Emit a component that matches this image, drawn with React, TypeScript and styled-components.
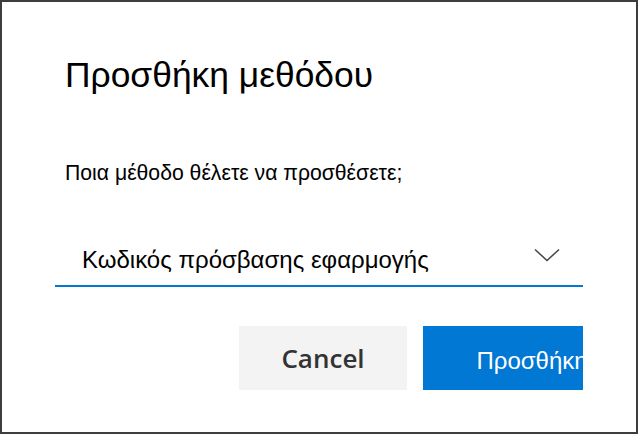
import React from "react";
import styled, { createGlobalStyle } from "styled-components";

const GlobalStyle = createGlobalStyle`
  html, body {
    margin: 0;
    padding: 0;
    background: #ffffff;
  }
  * {
    box-sizing: border-box;
  }
`;

const Frame = styled.div`
  width: 638px;
  height: 434px;
  border: 2px solid #3d3d3d;
  background: #ffffff;
  overflow: hidden;
`;

const Dialog = styled.div`
  width: 528px;
  margin-left: 53px;
  padding-top: 53px;
  overflow: hidden;
  font-family: "Liberation Sans", Arial, sans-serif;
  color: #000000;
`;

const Title = styled.h1`
  margin: 0;
  padding-left: 10px;
  font-size: 35.4px;
  font-weight: 400;
  line-height: 40px;
`;

const Question = styled.p`
  margin: 66px 0 0;
  padding-left: 10px;
  font-size: 21.2px;
  line-height: 24px;
`;

const Select = styled.div`
  margin-top: 50px;
  height: 52px;
  display: flex;
  align-items: center;
  justify-content: space-between;
  padding: 2px 23px 2px 27px;
  border-bottom: 2px solid #0078d4;
`;

const SelectValue = styled.span`
  font-size: 24px;
  line-height: 30px;
`;

const ChevronIcon = styled.svg`
  margin-bottom: 10px;
`;

const Actions = styled.div`
  display: flex;
  gap: 16px;
  margin-top: 39px;
  padding-left: 184px;
`;

const Button = styled.button<{ $primary?: boolean }>`
  flex: 0 0 auto;
  width: ${({ $primary }) => ($primary ? "218px" : "168px")};
  height: 64px;
  border: none;
  padding: ${({ $primary }) => ($primary ? "5px 0 0" : "0")};
  background: ${({ $primary }) => ($primary ? "#0078d4" : "#f3f3f3")};
  color: ${({ $primary }) => ($primary ? "#ffffff" : "#333333")};
  font-family: ${({ $primary }) =>
    $primary ? '"Liberation Sans", Arial, sans-serif' : '"Open Sans", "Noto Sans", sans-serif'};
  font-size: ${({ $primary }) => ($primary ? "24px" : "26px")};
  font-weight: ${({ $primary }) => ($primary ? 400 : 600)};
  cursor: pointer;
`;

const Chevron = () => (
  <ChevronIcon width="26" height="14" viewBox="0 0 26 14" fill="none">
    <path d="M1 1.5 L13 12.5 L25 1.5" stroke="#444" strokeWidth="1.5" />
  </ChevronIcon>
);

export default function App() {
  return (
    <>
      <GlobalStyle />
      <Frame>
        <Dialog>
          <Title>Προσθήκη μεθόδου</Title>
          <Question>Ποια μέθοδο θέλετε να προσθέσετε;</Question>
          <Select>
            <SelectValue>Κωδικός πρόσβασης εφαρμογής</SelectValue>
            <Chevron />
          </Select>
          <Actions>
            <Button>Cancel</Button>
            <Button $primary>Προσθήκη</Button>
          </Actions>
        </Dialog>
      </Frame>
    </>
  );
}
